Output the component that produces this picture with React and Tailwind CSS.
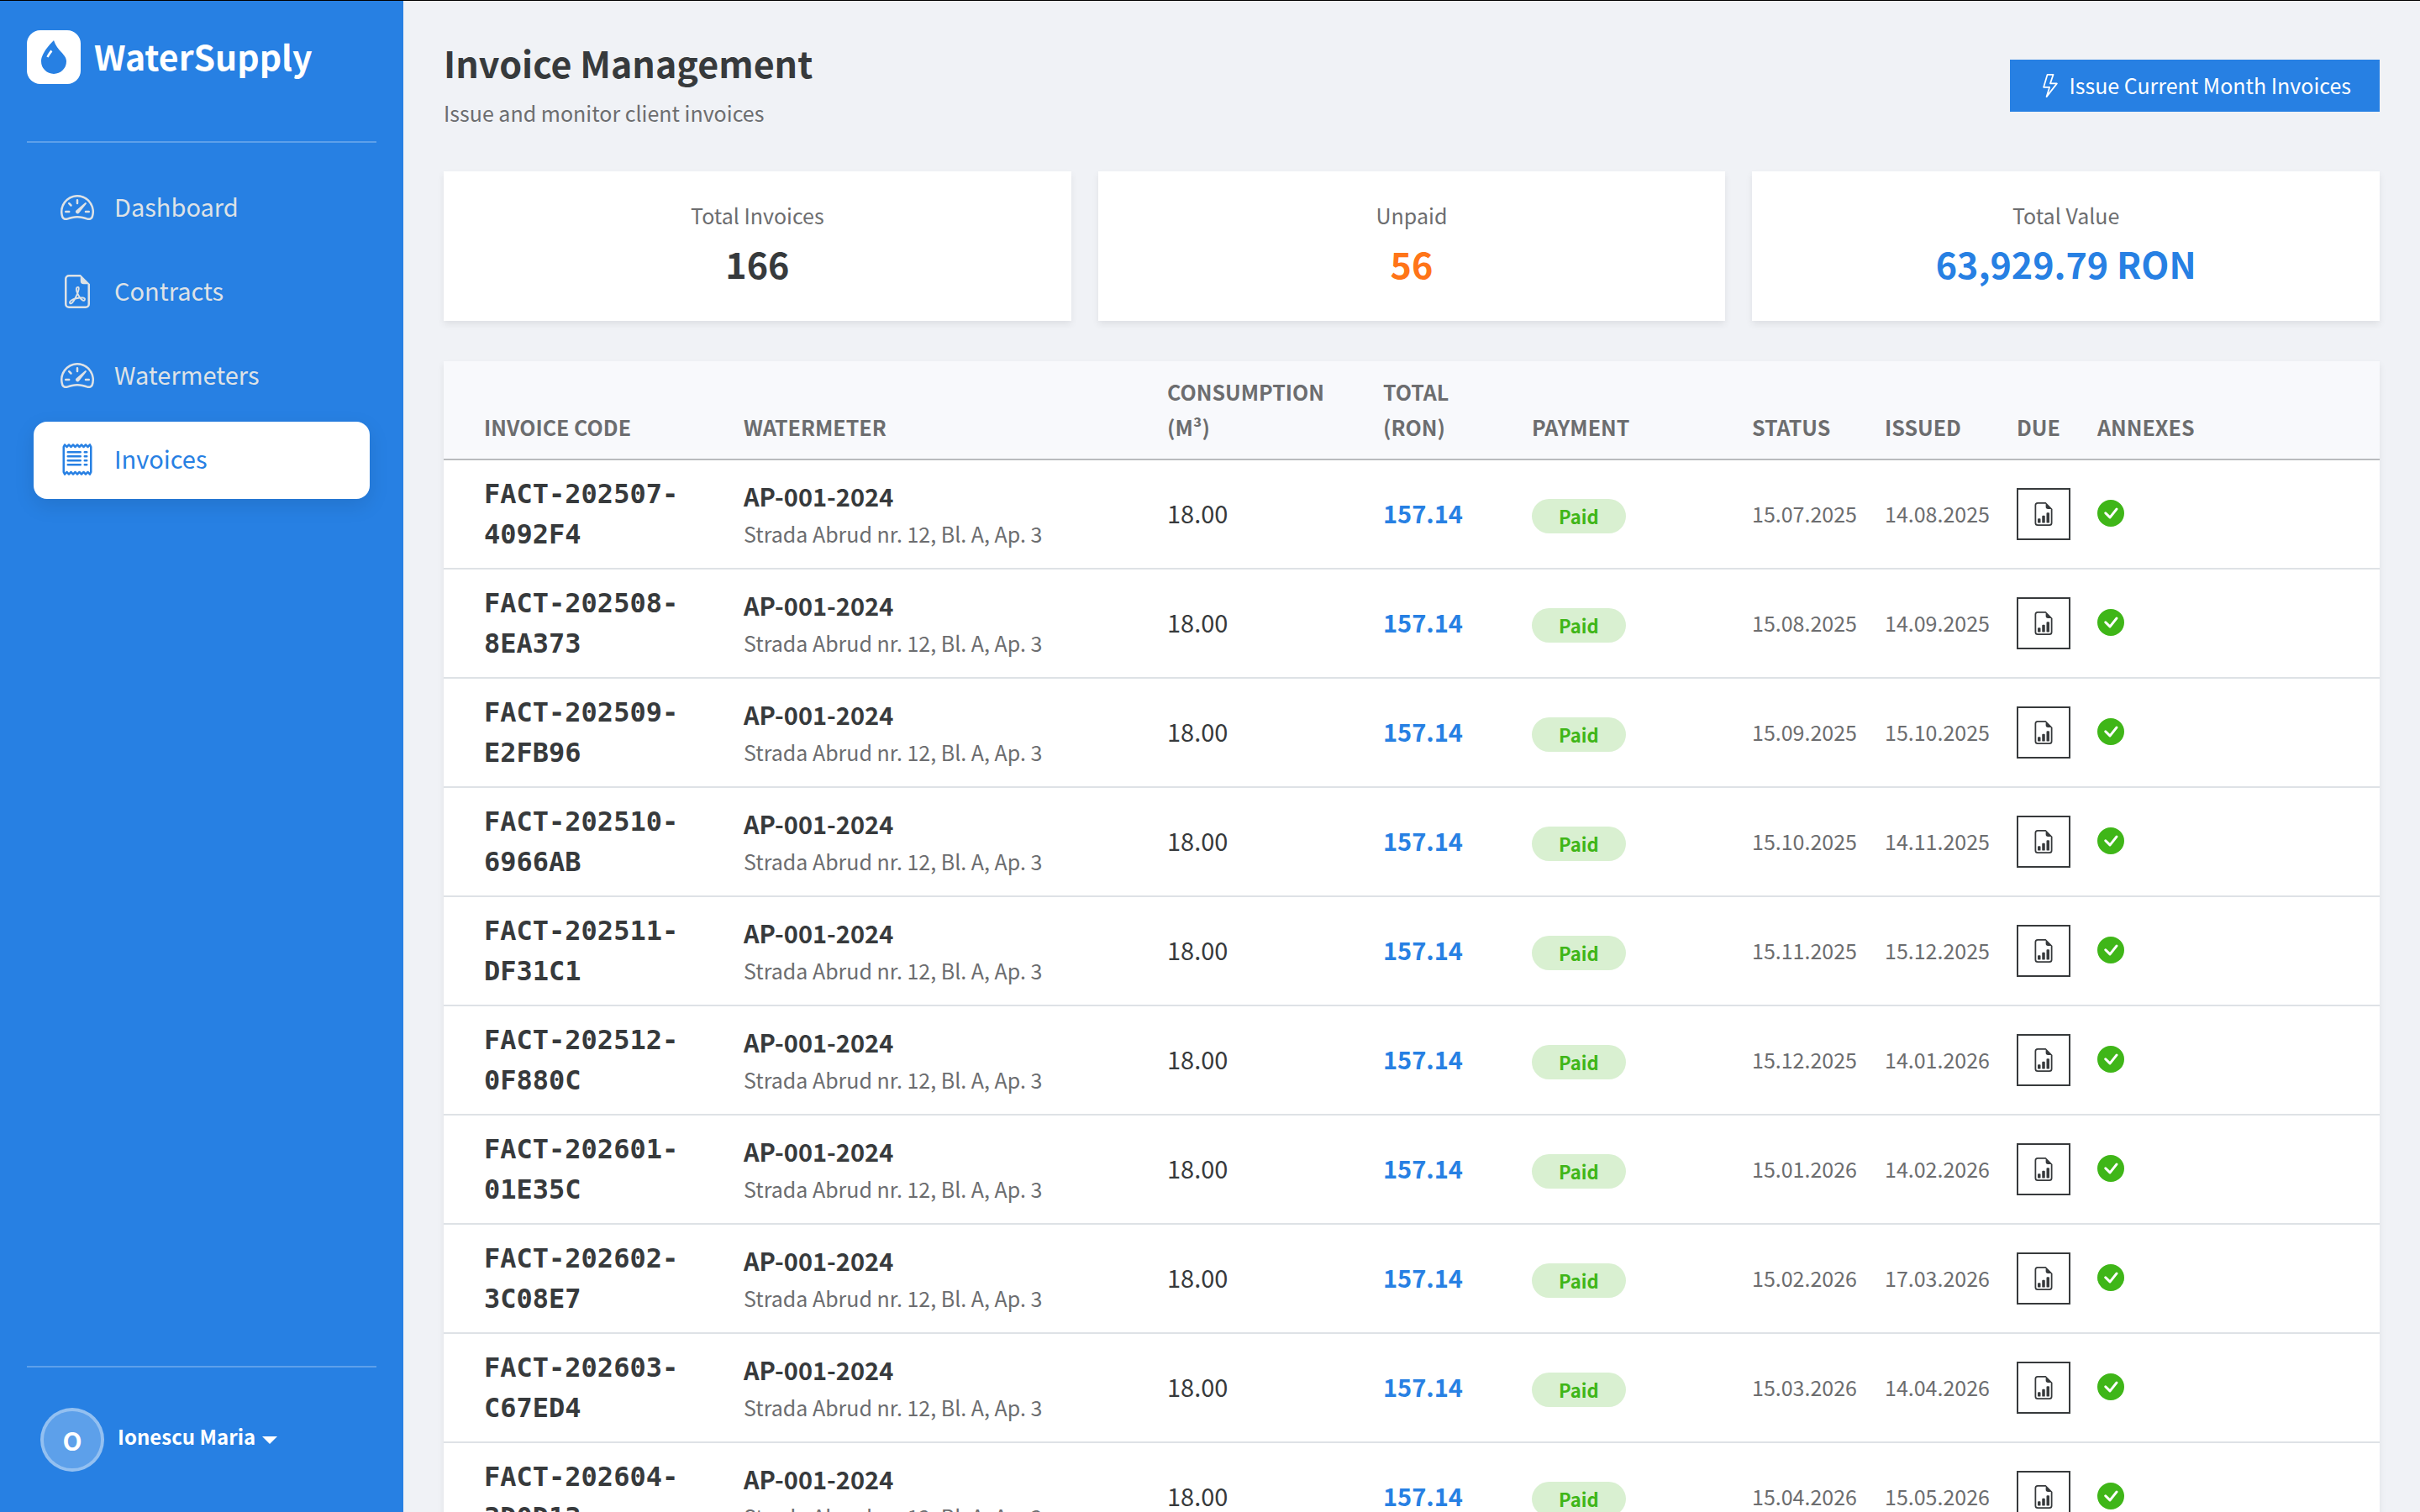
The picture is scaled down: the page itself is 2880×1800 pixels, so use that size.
import {
  BsCheckCircleFill,
  BsFileEarmarkBarGraph,
  BsFileEarmarkPdf,
  BsLightning,
  BsReceipt,
  BsSpeedometer2,
  BsDropletFill,
} from "react-icons/bs";

const NAV = [
  { label: "Dashboard", Icon: BsSpeedometer2 },
  { label: "Contracts", Icon: BsFileEarmarkPdf },
  { label: "Watermeters", Icon: BsSpeedometer2 },
  { label: "Invoices", Icon: BsReceipt, active: true },
];

const STATS = [
  { label: "Total Invoices", value: "166", color: "text-[#373a3c]" },
  { label: "Unpaid", value: "56", color: "text-[#ff7518]" },
  { label: "Total Value", value: "63,929.79 RON", color: "text-[#2780e3]" },
];

const COLUMNS = [
  { label: "Invoice code", width: "w-[341px]" },
  { label: "Watermeter", width: "w-[504px]" },
  { label: "Consumption (m³)", width: "w-[257px]" },
  { label: "Total (RON)", width: "w-[177px]" },
  { label: "Payment", width: "w-[262px]" },
  { label: "Status", width: "w-[158px]" },
  { label: "Issued", width: "w-[157px]" },
  { label: "Due", width: "w-24" },
  { label: "Annexes", width: "" },
];

const INVOICES = [
  ["FACT-202507-4092F4", "15.07.2025", "14.08.2025"],
  ["FACT-202508-8EA373", "15.08.2025", "14.09.2025"],
  ["FACT-202509-E2FB96", "15.09.2025", "15.10.2025"],
  ["FACT-202510-6966AB", "15.10.2025", "14.11.2025"],
  ["FACT-202511-DF31C1", "15.11.2025", "15.12.2025"],
  ["FACT-202512-0F880C", "15.12.2025", "14.01.2026"],
  ["FACT-202601-01E35C", "15.01.2026", "14.02.2026"],
  ["FACT-202602-3C08E7", "15.02.2026", "17.03.2026"],
  ["FACT-202603-C67ED4", "15.03.2026", "14.04.2026"],
  ["FACT-202604-3D0D13", "15.04.2026", "15.05.2026"],
];

function Sidebar() {
  return (
    <aside className="flex w-[480px] shrink-0 flex-col bg-[#2780e3] px-8 text-white">
      <a href="#" className="mt-[35px] flex h-16 items-center gap-4">
        <span className="flex size-16 items-center justify-center rounded-2xl bg-white text-[#2780e3]">
          <BsDropletFill className="size-10" />
        </span>
        <span className="pb-1 text-[41px] leading-[60px] font-bold">WaterSupply</span>
      </a>
      <hr className="mt-[68px] border-t-2 border-white/25" />
      <nav className="mt-8 flex flex-col gap-2 px-2">
        {NAV.map(({ label, Icon, active }) => (
          <a
            key={label}
            href="#"
            aria-current={active ? "page" : undefined}
            className={
              active
                ? "flex h-[92px] items-center gap-6 rounded-2xl bg-white px-8 pb-0.5 text-[29px] text-[#2780e3] shadow-[0_8px_24px_rgba(0,0,0,0.1)]"
                : "flex h-[92px] items-center gap-6 rounded-2xl px-8 pb-0.5 text-[29px] text-[#dee2e6]"
            }
          >
            <Icon className="size-10" />
            <span className="pb-0.5">{label}</span>
          </a>
        ))}
      </nav>
      <div className="mt-auto border-t-2 border-white/25 px-4 pt-12 pb-12">
        <button type="button" className="flex items-center gap-4 text-[24px] font-bold">
          <span className="flex size-[76px] items-center justify-center rounded-full border-4 border-white/50 bg-white/25 bg-clip-padding text-[30px]">
            O
          </span>
          <span className="flex items-center gap-2 pb-2">
            Ionescu Maria
            <svg viewBox="0 0 18 9" className="mt-2 h-[9px] w-[18px]" fill="currentColor" aria-hidden="true">
              <path d="M0 0H18L9 9Z" />
            </svg>
          </span>
        </button>
      </div>
    </aside>
  );
}

function InvoiceRow({ code, status, issued }) {
  return (
    <tr className="border-b-2 border-[#dee2e6]">
      <td className="py-4 pr-4 pl-12 font-['DejaVu_Sans_Mono',monospace] text-[32px] leading-12 font-bold">
        {code}
      </td>
      <td className="px-4 pb-0.5">
        <div className="text-[29px] leading-12 font-bold">AP-001-2024</div>
        <div className="text-[25px] leading-[42px] text-[#6c6d6f]">Strada Abrud nr. 12, Bl. A, Ap. 3</div>
      </td>
      <td className="px-4 pb-0.5 text-[29px]">18.00</td>
      <td className="px-4 pb-0.5 text-[29px] font-bold text-[#2780e3]">157.14</td>
      <td className="px-4">
        <span className="mt-1 inline-block rounded-full bg-[#d9f0d1] px-8 text-[22px] leading-[41px] font-bold text-[#3fb618]">
          Paid
        </span>
      </td>
      <td className="px-4 text-[25px] text-[#6c6d6f]">{status}</td>
      <td className="px-4 text-[25px] text-[#6c6d6f]">{issued}</td>
      <td className="px-4">
        <button
          type="button"
          aria-label="View invoice"
          className="flex h-[62px] w-16 items-center justify-center border-2 border-[#373a3c]"
        >
          <BsFileEarmarkBarGraph className="size-7" />
        </button>
      </td>
      <td className="px-4 pb-0.5">
        <BsCheckCircleFill className="size-8 text-[#3fb618]" />
      </td>
    </tr>
  );
}

export default function App() {
  return (
    <div className="flex h-screen overflow-hidden border-t border-black bg-[#f0f2f6] font-['Noto_Sans_CJK_JP',sans-serif] text-[#373a3c]">
      <Sidebar />
      <main className="min-w-0 flex-1 px-12 pt-[47px]">
        <header className="flex items-start justify-between">
          <div>
            <h1 className="text-[43px] leading-[52px] font-bold">Invoice Management</h1>
            <p className="mt-3 text-[25px] leading-[44px] text-[#6c6d6f]">Issue and monitor client invoices</p>
          </div>
          <button
            type="button"
            className="mt-[23px] flex h-[62px] items-center gap-2 bg-[#2780e3] px-[34px] text-[25px] text-white"
          >
            <BsLightning className="size-7" />
            Issue Current Month Invoices
          </button>
        </header>
        <section className="mt-12 grid grid-cols-3 gap-8">
          {STATS.map((s) => (
            <div key={s.label} className="bg-white px-8 pt-8 pb-10 text-center shadow-[0_4px_8px_rgba(0,0,0,0.075)]">
              <div className="text-[25px] leading-[40px] text-[#6c6d6f]">{s.label}</div>
              <div className={`mt-2 text-[43px] leading-[58px] font-bold ${s.color}`}>{s.value}</div>
            </div>
          ))}
        </section>
        <section className="mt-12 bg-white shadow-[0_4px_8px_rgba(0,0,0,0.075)]">
          <table className="w-full table-fixed border-collapse text-left">
            <thead className="bg-[#f8f9fc]">
              <tr className="border-b-2 border-[#b9bbbe]">
                {COLUMNS.map((c) => (
                  <th
                    key={c.label}
                    scope="col"
                    className={`px-4 pt-[15px] pb-[17px] align-bottom text-[25px] leading-[42px] font-bold text-[#6c6d6f] uppercase first:pl-12 ${c.width}`}
                  >
                    {c.label}
                  </th>
                ))}
              </tr>
            </thead>
            <tbody>
              {INVOICES.map(([code, status, issued]) => (
                <InvoiceRow key={code} code={code} status={status} issued={issued} />
              ))}
            </tbody>
          </table>
        </section>
      </main>
    </div>
  );
}
